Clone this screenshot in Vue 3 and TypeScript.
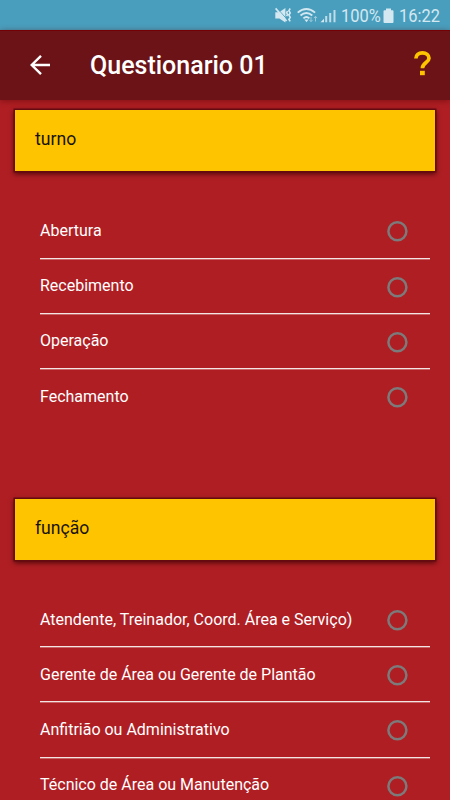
<script setup lang="ts">
interface Question {
  title: string
  options: string[]
}

const questions: Question[] = [
  { title: 'turno', options: ['Abertura', 'Recebimento', 'Operação', 'Fechamento'] },
  {
    title: 'função',
    options: [
      'Atendente, Treinador, Coord. Área e Serviço)',
      'Gerente de Área ou Gerente de Plantão',
      'Anfitrião ou Administrativo',
      'Técnico de Área ou Manutenção',
    ],
  },
]
</script>

<template>
  <div class="screen">
    <div class="status">
      <svg class="status-icons" width="66" height="30" viewBox="0 0 66 30" fill="none">
        <path d="M0.3 12.2h3.8L10.4 8v14.6l-6-4H0.3z" fill="#d3e8f1" />
        <path d="M2.4 8.6l8.8 9.8" stroke="#4a9ebd" stroke-width="0.9" />
        <path d="M0.6 8.4l11 12.6" stroke="#d3e8f1" stroke-width="1.7" />
        <path d="M12.6 11l-1 1.7 1 1.7-1 1.7M15.2 8.5l-1.3 2.2 1.3 2.2-1.3 2.2 1.3 2.2-1.3 2.2 1.3 1.9" stroke="#d3e8f1" stroke-width="1.6" />
        <path d="M22.7 12.6q8.7-7.4 17.4 0M25.5 15.5q5.9-4.9 11.8 0M28.4 18.4q3-2.6 6 0" stroke="#d3e8f1" stroke-width="1.9" />
        <path d="M29.4 19.5h4.2l-2.1 2.8z" fill="#d3e8f1" />
        <path d="M36 17v4.5m-1.6-1.6l1.6 1.8 1.6-1.8M40.5 21.5v-5m-1.6 1.6l1.6-1.8 1.6 1.8" stroke="#9bcadb" stroke-width="1" />
        <path d="M45.5 22.2l3.5-3.5v3.5z" fill="#d3e8f1" />
        <path d="M51.2 16v6.2M55.2 13v9.2M59.5 10v12.2" stroke="#d3e8f1" stroke-width="2" opacity=".85" />
      </svg>
      <span class="percent">100%</span>
      <svg class="battery" width="11" height="16" viewBox="0 0 11 16">
        <path d="M3 0.5h5v1.7h1.5q1 0 1 1V14q0 1-1 1h-8q-1 0-1-1V3.2q0-1 1-1H3z" fill="#d3e8f1" />
      </svg>
      <span class="clock">16:22</span>
    </div>
    <header class="bar">
      <svg class="back" width="20" height="20" viewBox="0 0 20 20" fill="none" stroke="#fff" stroke-width="2.4">
        <path d="M11 0.9L1.7 10l9.3 9.1M2 10h18" />
      </svg>
      <h1>Questionario 01</h1>
      <svg class="help" width="17" height="25" viewBox="0 0 17 25">
        <path d="M1.9 7.6C1.9 4.1 4.5 1.9 8.4 1.9S15 4.1 15 7.3C15 11.5 8.4 11.8 8.4 17.3" fill="none" stroke="#ffc400" stroke-width="3.7" />
        <path d="M6 19.8h4.8v4.4H6z" fill="#ffc400" />
      </svg>
    </header>
    <main>
      <section v-for="question in questions" :key="question.title">
        <h2>{{ question.title }}</h2>
        <ul>
          <li v-for="option in question.options" :key="option">
            <span class="label">{{ option }}</span>
            <svg class="radio" width="22" height="22" viewBox="0 0 22 22">
              <circle cx="11.4" cy="11.2" r="9" fill="none" stroke="#7c7a7a" stroke-width="2.5" />
            </svg>
          </li>
        </ul>
      </section>
    </main>
  </div>
</template>

<style>
body {
  margin: 0;
  overflow: hidden;
}
</style>

<style scoped>
.screen {
  height: 800px;
  overflow: hidden;
  display: flex;
  flex-direction: column;
  background: #af1e23;
  color: #fff;
  font-family: Roboto, sans-serif;
}
.status {
  flex: none;
  box-sizing: border-box;
  height: 30px;
  padding-left: 275px;
  display: flex;
  align-items: center;
  background: #4a9ebd;
  color: #d3e8f1;
  font-size: 17.8px;
  line-height: 30px;
}
.status-icons,
.battery,
.percent,
.clock {
  flex: none;
}
.percent,
.clock {
  padding-top: 2px;
  transform: scaleX(0.925);
  transform-origin: left center;
}
.percent {
  width: 39px;
}
.battery {
  margin: 1px 0 0 3px;
}
.clock {
  margin-left: 5px;
}
.bar {
  flex: none;
  box-sizing: border-box;
  height: 70px;
  padding: 0 19px 0 30px;
  display: flex;
  align-items: center;
  background: #6c1317;
  border-top: 1px solid #740006;
  box-shadow: 0 1px 6px rgba(70, 0, 0, 0.45);
}
.back {
  margin-top: -1px;
}
h1 {
  flex: 1;
  margin: 0 0 0 40px;
  font-size: 25px;
  line-height: 30px;
  font-weight: 500;
}
.help {
  margin-top: -5px;
}
main {
  padding-top: 10px;
}
section {
  height: 388.6px;
}
h2 {
  box-sizing: border-box;
  height: 61px;
  margin: 0 15px;
  padding-left: 20px;
  background: #ffc400;
  color: #17130a;
  font-size: 17.6px;
  line-height: 59px;
  font-weight: 400;
  box-shadow: 0 0 0 1.5px #650b10, 0 2px 5px 1px rgba(50, 0, 0, 0.75);
}
ul {
  list-style: none;
  margin: 32.4px 20px 0 40px;
  padding: 0;
}
li {
  box-sizing: border-box;
  height: 55.2px;
  padding-right: 22px;
  display: flex;
  align-items: center;
  justify-content: space-between;
  font-size: 16px;
  border-bottom: 1px solid #f4e4e4;
  box-shadow: 0 0.5px 0 #e0a8aa;
}
li:last-child {
  border-bottom-color: transparent;
  box-shadow: none;
}
.label {
  white-space: nowrap;
}
.radio {
  margin-top: 2px;
}
</style>
